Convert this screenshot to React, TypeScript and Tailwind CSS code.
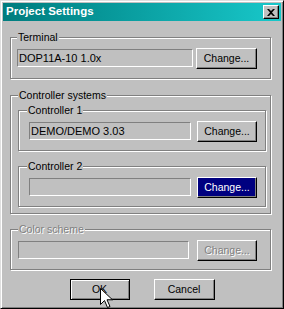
import type { ReactNode } from "react";

const raised =
  "border border-t-white border-l-white border-r-black border-b-black shadow-[inset_-1px_-1px_0_#808080]";

function Field({ value, disabled }: { value?: string; disabled?: boolean }) {
  return (
    <div
      className={`mt-[1px] flex h-[18px] flex-1 items-center border border-t-[#808080] border-l-[#808080] border-r-white border-b-white bg-[#c0c0c0] pl-[1px] text-[11px] ${
        disabled ? "text-[#808080]" : "text-black"
      }`}
    >
      {value}
    </div>
  );
}

function ChangeButton({ active, disabled, wide }: { active?: boolean; disabled?: boolean; wide?: boolean }) {
  let tone = "bg-[#c0c0c0] text-black";
  if (active) tone = "bg-[#000080] text-white";
  if (disabled) tone = "bg-[#c0c0c0] text-[#808080] [text-shadow:1px_1px_0_#fff]";
  return (
    <button
      type="button"
      className={`flex h-[21px] ${wide ? "w-[61px]" : "w-[60px]"} items-center justify-center ${raised} ${tone} text-[10.5px]`}
    >
      Change...
    </button>
  );
}

interface GroupProps {
  label: string;
  disabled?: boolean;
  className: string;
  legendClass?: string;
  children: ReactNode;
}

function Group({ label, disabled, className, legendClass = "", children }: GroupProps) {
  return (
    <fieldset
      className={`border border-[#808080] shadow-[inset_1px_1px_0_#fff,1px_1px_0_#fff] ${className}`}
    >
      <legend
        className={`h-[13px] bg-[#c0c0c0] px-[1px] text-[10.5px] leading-[13px] ${
          disabled ? "text-[#808080] [text-shadow:1px_1px_0_#fff]" : "text-black"
        } ${legendClass}`}
      >
        {label}
      </legend>
      {children}
    </fieldset>
  );
}

function CloseGlyph() {
  return (
    <svg width="8" height="7" viewBox="0 0 8 7" aria-hidden="true">
      <path d="M0 0h2l2 2 2-2h2L5 3.5 8 7H6L4 5 2 7H0l3-3.5z" fill="#000" />
    </svg>
  );
}

function Cursor() {
  return (
    <svg
      className="absolute left-[99px] top-[287px]"
      width="13"
      height="21"
      viewBox="0 0 13 21"
      aria-hidden="true"
    >
      <path
        d="M0.5 0.5v16l4-4 3 7 2.5-1-3-6.7h5.5z"
        fill="#fff"
        stroke="#000"
        strokeWidth="1"
        strokeLinejoin="miter"
      />
    </svg>
  );
}

export default function App() {
  return (
    <div className="relative flex h-[309px] w-[284px] flex-col border border-t-[#dfdfdf] border-l-[#dfdfdf] border-r-black border-b-black bg-[#c0c0c0] p-[2px] font-['Liberation_Sans',Arial,sans-serif] shadow-[inset_1px_1px_0_#fff,inset_-1px_-1px_0_#808080]">
      <div className="flex h-[18px] items-center justify-between bg-linear-to-r from-[#007c7e] to-[#18c8ca] pl-[3px] pr-[2px]">
        <span className="text-[11.5px] font-bold text-white">Project Settings</span>
        <button
          type="button"
          className={`flex h-[14px] w-[16px] items-center justify-center bg-[#c0c0c0] ${raised}`}
          aria-label="Close"
        >
          <CloseGlyph />
        </button>
      </div>

      <div className="flex flex-col pl-[7px]">
        <Group label="Terminal" className="mt-[10px] w-[261px] pl-[6px] pr-[13px] pt-[4px] pb-[9px]">
          <div className="flex items-start gap-[3px]">
            <Field value="DOP11A-10 1.0x" />
            <ChangeButton wide />
          </div>
        </Group>

        <Group label="Controller systems" className="mt-[10px] w-[261px] pl-[7px] pr-[4px] pt-[2px] pb-[6px]">
          <Group
            label="Controller 1"
            className="w-[248px] pl-[10px] pr-[8px] pt-[4px] pb-[8px]"
            legendClass="-ml-[2px]"
          >
            <div className="flex items-start gap-[6px]">
              <Field value="DEMO/DEMO 3.03" />
              <ChangeButton />
            </div>
          </Group>
          <Group
            label="Controller 2"
            className="mt-[9px] w-[248px] pl-[10px] pr-[8px] pt-[4px] pb-[8px]"
            legendClass="-ml-[2px]"
          >
            <div className="flex items-start gap-[6px]">
              <Field />
              <ChangeButton active />
            </div>
          </Group>
        </Group>

        <Group
          label="Color scheme"
          disabled
          className="mt-[9px] w-[261px] pl-[7px] pr-[13px] pt-[4px] pb-[8px]"
        >
          <div className="flex items-start gap-[8px]">
            <Field disabled />
            <ChangeButton disabled />
          </div>
        </Group>
      </div>

      <div className="mt-[9px] flex justify-center gap-[24px]">
        <button
          type="button"
          className="h-[21px] w-[60px] border border-black bg-[#c0c0c0] text-[10.5px] text-black shadow-[inset_1px_1px_0_#fff,inset_-1px_-1px_0_#808080]"
        >
          OK
        </button>
        <button type="button" className={`h-[21px] w-[61px] bg-[#c0c0c0] text-[10.5px] text-black ${raised}`}>
          Cancel
        </button>
      </div>

      <Cursor />
    </div>
  );
}
